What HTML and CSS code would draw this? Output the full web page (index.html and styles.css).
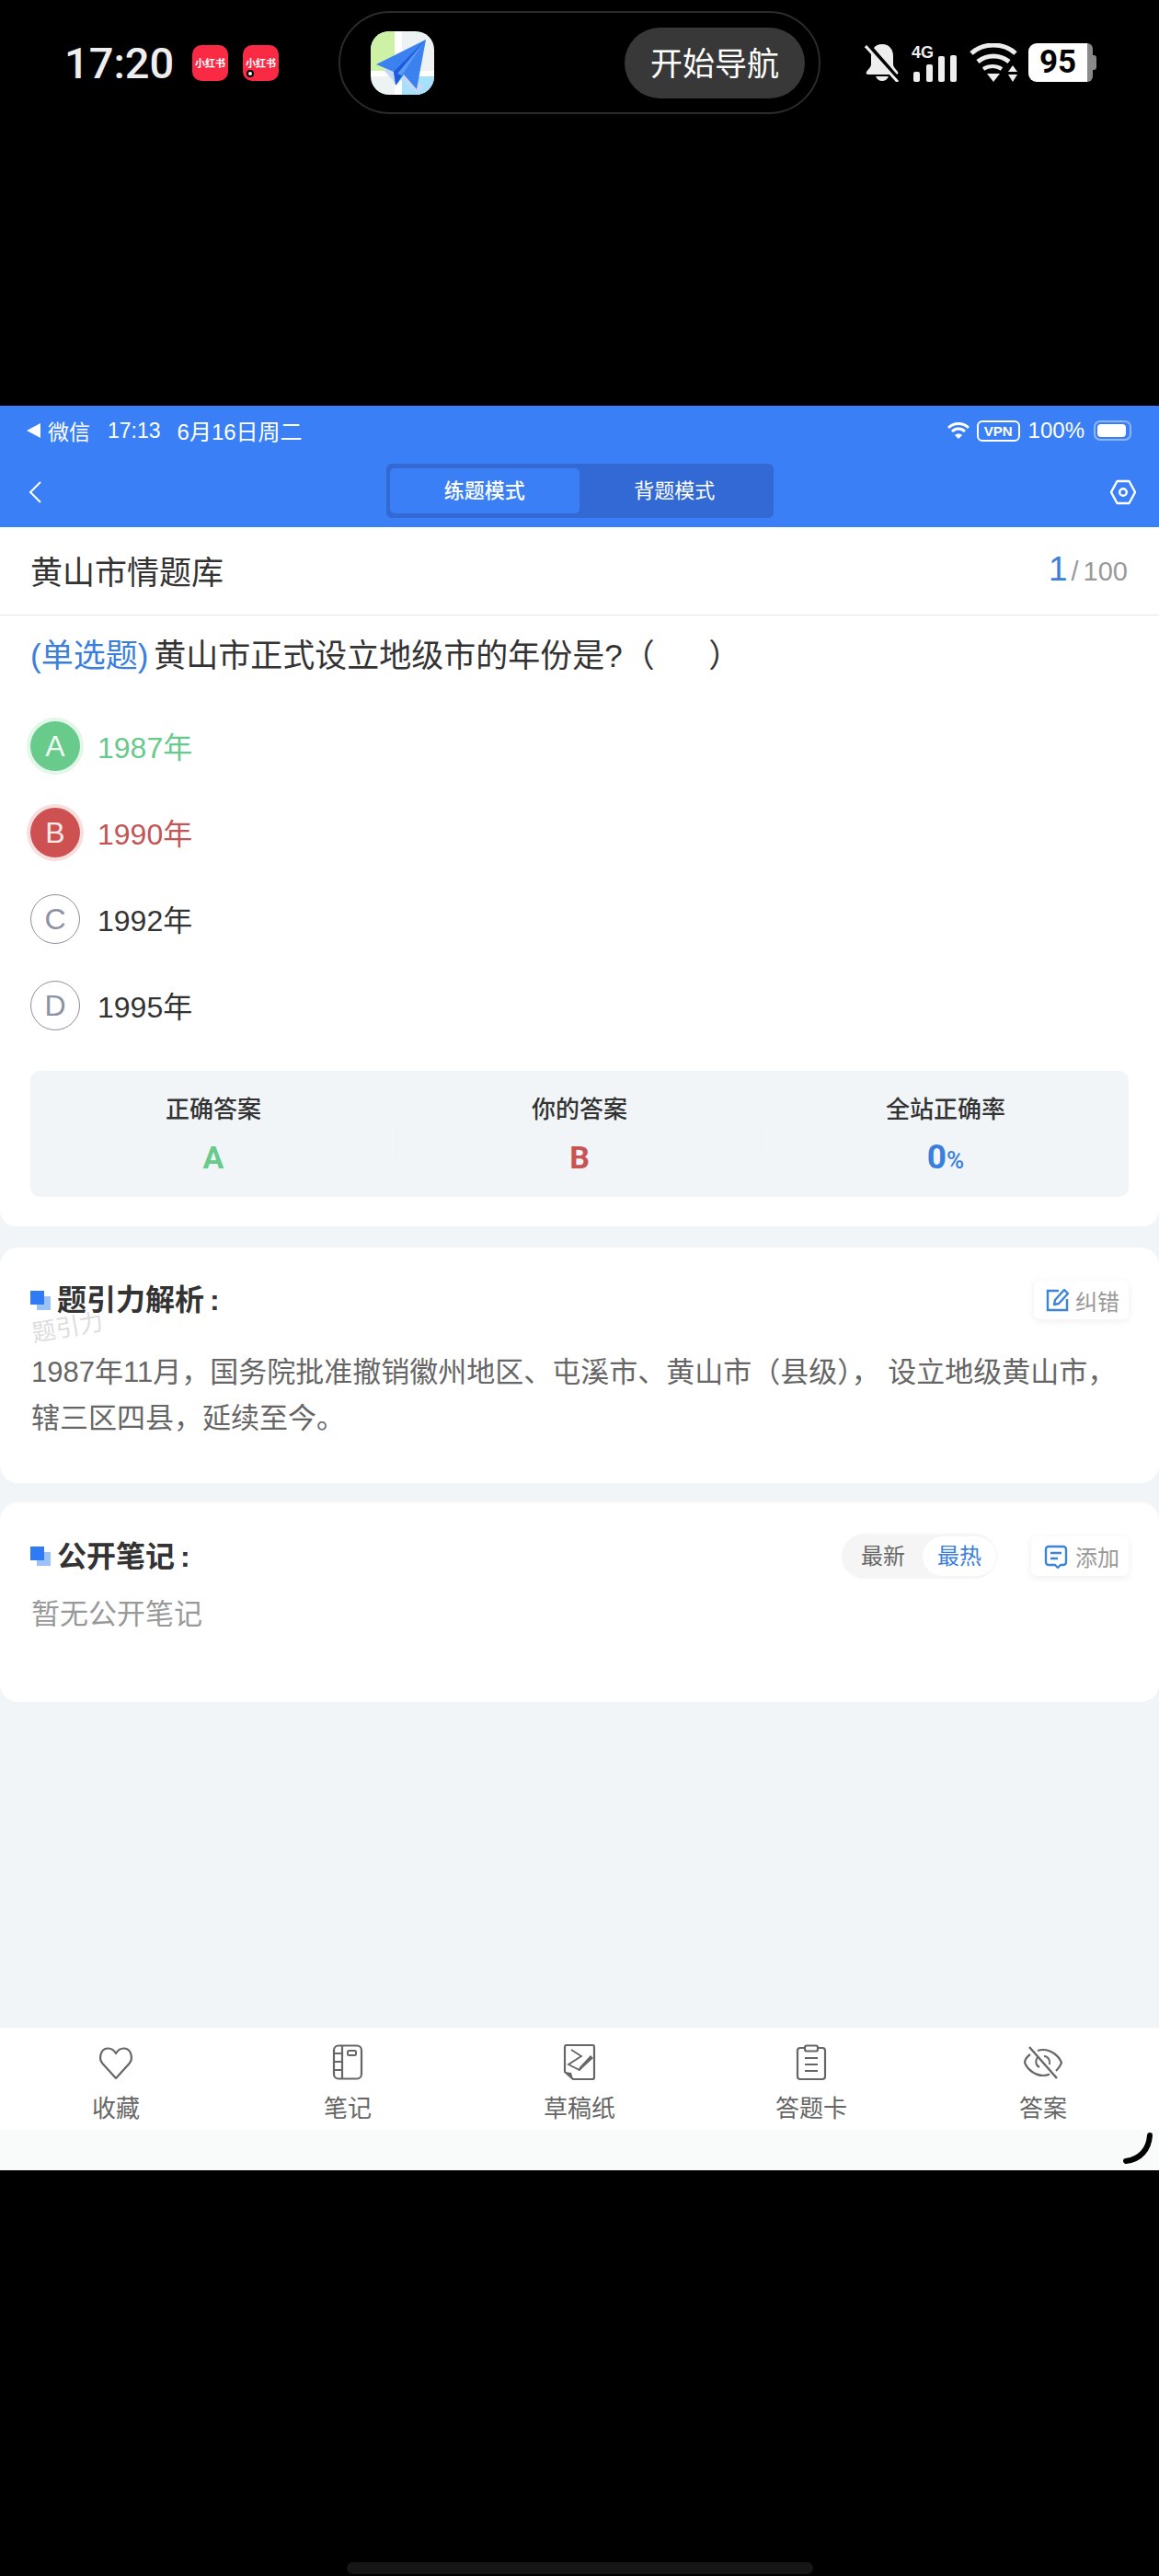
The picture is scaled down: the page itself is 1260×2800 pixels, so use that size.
FILE: index.html
```html
<!DOCTYPE html>
<html lang="zh-CN">
  <head>
    <meta charset="UTF-8" />
    <title>黄山市情题库</title>
    <link rel="stylesheet" href="styles.css">
  </head>
  <body>
    <div class="phone-top">
      <div class="phone-bar">
        <span class="phone-time">17:20</span>
        <span class="note-icon">小红书</span>
        <span class="note-icon note-icon-dot">小红书<i class="dot"></i></span>
        <div class="island">
          <svg class="nav-app" viewBox="0 0 69 69" width="69" height="69">
            <rect width="69" height="69" fill="#edf2f2"/>
            <rect width="26" height="43" fill="#cdf2a6"/>
            <rect x="34" y="48" width="35" height="21" fill="#a6e0fa"/>
            <rect x="26" width="8" height="69" fill="#fff"/>
            <rect y="43" width="69" height="6" fill="#fff"/>
            <polygon points="14,42 28,58 34,52 50,67 58,60 30,38" fill="#c4d9f7"/>
            <polygon points="60,9 6,36 25,44 28,58 36,47 50,63" fill="#3b82f0"/>
            <polygon points="60,9 25,44 27,59 34,48" fill="#1b5bdc"/>
            <polygon points="60,9 29,46 34,48" fill="#5b9af5"/>
          </svg>
          <span class="nav-btn">开始导航</span>
        </div>
        <svg class="bell" viewBox="0 0 38 42" width="38" height="42">
          <path d="M19 1c-8 0-12 6-12 13v9c0 3-3 5-5 8-1 2 0 3 2 3h30c2 0 3-1 2-3-2-3-5-5-5-8v-9C31 7 27 1 19 1z" fill="#eee"/>
          <path d="M12 36c1 3 4 5 7 5s6-2 7-5z" fill="#eee"/>
          <path d="M3 1l34 39" stroke="#000" stroke-width="5"/>
          <path d="M1 3l35 39" stroke="#eee" stroke-width="3"/>
        </svg>
        <svg class="signal" viewBox="0 0 50 42" width="50" height="42">
          <text x="0" y="16" class="signal-label">4G</text>
          <rect x="2" y="31" width="7" height="11" rx="2" fill="#eee"/>
          <rect x="16" y="23" width="7" height="19" rx="2" fill="#eee"/>
          <rect x="29" y="14" width="7" height="28" rx="2" fill="#eee"/>
          <rect x="42" y="13" width="7" height="29" rx="2" fill="#eee"/>
        </svg>
        <svg class="wifi" viewBox="0 0 52 42" width="52" height="42">
          <path d="M2 11C15-1 37-1 50 11" fill="none" stroke="#eee" stroke-width="5"/>
          <path d="M9 20c10-8 24-8 34 0" fill="none" stroke="#eee" stroke-width="5"/>
          <path d="M15 28c6-4 14-4 20 0" fill="none" stroke="#eee" stroke-width="4"/>
          <polygon points="19,33 33,33 26,42" fill="#eee"/>
          <polygon points="47,24 52,31 42,31" fill="#eee"/>
          <polygon points="42,34 52,34 47,42" fill="#eee"/>
        </svg>
        <div class="phone-batt"><span>95</span><i></i></div>
      </div>
    </div>

    <div class="app">
      <header class="app-header">
        <div class="ios-status">
          <svg viewBox="0 0 15 16" width="15" height="16"><polygon points="15,0 15,16 0,8" fill="#fff"/></svg>
          <span class="ios-app">微信</span>
          <span class="ios-time">17:13</span>
          <span class="ios-date">6月16日周二</span>
          <span class="ios-right">
            <svg viewBox="0 0 24 20" width="24" height="20">
              <path d="M1 7c6-6 16-6 22 0" fill="none" stroke="#fff" stroke-width="3"/>
              <path d="M5 11c4-4 10-4 14 0" fill="none" stroke="#fff" stroke-width="3"/>
              <path d="M12 19l-4-4c2-2 6-2 8 0z" fill="#fff"/>
            </svg>
            <span class="vpn">VPN</span>
            <span class="ios-pct">100%</span>
            <span class="ios-batt"><i></i></span>
          </span>
        </div>
        <div class="nav-row">
          <svg class="nav-back" viewBox="0 0 14 24" width="14" height="24"><path d="M13 1L2 12l11 11" fill="none" stroke="#fff" stroke-width="2"/></svg>
          <div class="mode-switch">
            <span class="mode mode-on">练题模式</span>
            <span class="mode">背题模式</span>
          </div>
          <svg class="nav-gear" viewBox="0 0 28 28" width="28" height="28">
            <polygon points="7.5,2 20.5,2 27,14 20.5,26 7.5,26 1,14" fill="none" stroke="#fff" stroke-width="2.4" stroke-linejoin="round"/>
            <circle cx="14" cy="14" r="3.8" fill="none" stroke="#fff" stroke-width="2.4"/>
          </svg>
        </div>
      </header>

      <section class="card question-card">
        <div class="bank-row">
          <span class="bank-name">黄山市情题库</span>
          <span class="bank-count"><b>1</b><i>/</i>100</span>
        </div>
        <div class="question"><span class="q-type">(单选题)</span>黄山市正式设立地级市的年份是?<span>（&nbsp;&nbsp;&nbsp;&nbsp;&nbsp;&nbsp;）</span></div>
        <div class="options">
          <div class="option right"><span class="letter">A</span><span class="opt-text">1987年</span></div>
          <div class="option wrong"><span class="letter">B</span><span class="opt-text">1990年</span></div>
          <div class="option"><span class="letter">C</span><span class="opt-text">1992年</span></div>
          <div class="option"><span class="letter">D</span><span class="opt-text">1995年</span></div>
        </div>
        <div class="stats">
          <div class="stat"><span class="stat-label">正确答案</span><span class="stat-val green">A</span></div>
          <div class="stat stat-mid"><span class="stat-label">你的答案</span><span class="stat-val red">B</span></div>
          <div class="stat"><span class="stat-label">全站正确率</span><span class="stat-val blue">0<small>%</small></span></div>
        </div>
      </section>

      <section class="card analysis-card">
        <div class="card-head">
          <h2 class="card-title"><i class="marker"></i>题引力解析<span class="colon">:</span></h2>
          <span class="mini-btn">
            <svg viewBox="0 0 26 26" width="26" height="26">
              <path d="M14 3H2v21h21V12" fill="none" stroke="#3d84d6" stroke-width="2.4"/>
              <path d="M9 18l1-5L20 2l4 4-10 11z" fill="#fff" stroke="#3d84d6" stroke-width="2.4" stroke-linejoin="round"/>
            </svg>
            纠错
          </span>
        </div>
        <p class="analysis-text">1987年11月，国务院批准撤销徽州地区、屯溪市、黄山市（县级）， 设立地级黄山市，辖三区四县，延续至今。</p>
        <span class="watermark">题引力</span>
      </section>

      <section class="card notes-card">
        <div class="card-head">
          <h2 class="card-title"><i class="marker"></i>公开笔记<span class="colon">:</span></h2>
          <div class="head-tools">
            <div class="sort-switch">
              <span class="sort">最新</span>
              <span class="sort sort-on">最热</span>
            </div>
            <span class="mini-btn add-btn">
              <svg viewBox="0 0 26 26" width="26" height="26">
                <path d="M5 2h16a3 3 0 0 1 3 3v14a3 3 0 0 1-3 3h-3l-3 3-3-3H5a3 3 0 0 1-3-3V5a3 3 0 0 1 3-3z" fill="none" stroke="#3d84d6" stroke-width="2.4" stroke-linejoin="round"/>
                <path d="M7 9h12M7 15h8" stroke="#3d84d6" stroke-width="2.4"/>
              </svg>
              添加
            </span>
          </div>
        </div>
        <p class="empty-text">暂无公开笔记</p>
      </section>

      <div class="filler"></div>

      <nav class="tabbar">
        <div class="tab">
          <svg viewBox="0 0 40 40" width="40" height="40">
            <path d="M20 37L5.500 21C1 16 3 5 11 4.500c4-.2 7 2 9 5.500 2-3.500 5-5.700 9-5.500C37 5 39 16 34.500 21z" fill="none" stroke="#666" stroke-width="2.200" stroke-linejoin="round"/>
          </svg>
          <span>收藏</span>
        </div>
        <div class="tab">
          <svg viewBox="0 0 40 40" width="40" height="40">
            <rect x="5" y="1.500" width="30" height="36" rx="5" fill="none" stroke="#666" stroke-width="2.200"/>
            <path d="M14 2v35M5 10h9M5 19h9M5 28h9" stroke="#666" stroke-width="2.200"/>
            <rect x="20" y="7" width="9" height="5" rx="1.500" fill="none" stroke="#666" stroke-width="2"/>
          </svg>
          <span>笔记</span>
        </div>
        <div class="tab">
          <svg viewBox="0 0 40 40" width="40" height="40">
            <path d="M4 3a2 2 0 0 1 2-2h28a2 2 0 0 1 2 2v33a2 2 0 0 1-2 2H13l-9-8z" fill="none" stroke="#666" stroke-width="2.200" stroke-linejoin="round"/>
            <path d="M4 30l7 1 2 7z" fill="#666"/>
            <path d="M11 6l11 7-14 9 12 6 4-5" fill="none" stroke="#666" stroke-width="1.800"/>
            <path d="M20 25l12-13 3 3-13 12-3 1z" fill="#666"/>
          </svg>
          <span>草稿纸</span>
        </div>
        <div class="tab">
          <svg viewBox="0 0 40 40" width="40" height="40">
            <path d="M12 4H8a3 3 0 0 0-3 3v28a3 3 0 0 0 3 3h24a3 3 0 0 0 3-3V7a3 3 0 0 0-3-3h-4" fill="none" stroke="#666" stroke-width="2.200"/>
            <rect x="13" y="1.500" width="14" height="6" rx="2" fill="none" stroke="#666" stroke-width="2.200"/>
            <path d="M13 15h14M13 22h14M13 29h14" stroke="#666" stroke-width="2.200"/>
          </svg>
          <span>答题卡</span>
        </div>
        <div class="tab">
          <svg viewBox="0 0 42 40" width="42" height="40">
            <path d="M7 11C3 14 1 18 1 20c3 8 12 14 20 14 3 0 5-.5 7-1.500M15 7c2-.7 4-1 6-1 8 0 17 6 20 14-1 3-3 6-6 9" fill="none" stroke="#666" stroke-width="2.200"/>
            <path d="M6 3l30 34" stroke="#666" stroke-width="2.400"/>
            <path d="M15 14c-3 4-2 9 2 11M22 13c4 0 7 4 6 9" fill="none" stroke="#666" stroke-width="2"/>
          </svg>
          <span>答案</span>
        </div>
      </nav>
      <div class="tab-foot"></div>
      <svg class="corner-arc" viewBox="0 0 34 34" width="34" height="34"><path d="M30 3C29 18 20 29 4 31" fill="none" stroke="#000" stroke-width="6" stroke-linecap="round"/></svg>
    </div>

    <div class="phone-bottom"><span class="home-bar"></span></div>
  </body>
</html>
```

FILE: styles.css
```css
html {
  background: #000000;
}

body {
  margin: 0;
  width: 1260px;
  height: 2800px;
  overflow: hidden;
  background: #000000;
  font-family: "Liberation Sans", "Noto Sans CJK SC", sans-serif;
  color: #333333;
}

/* phone status bar */
.phone-top {
  height: 441px;
}
.phone-bar {
  display: flex;
  align-items: center;
  height: 136px;
  padding-left: 70px;
}
.phone-time {
  width: 117px;
  margin-right: 22px;
  font-family: Roboto, sans-serif;
  font-size: 47px;
  font-weight: 500;
  color: #eeeeee;
}
.note-icon {
  position: relative;
  display: flex;
  align-items: center;
  justify-content: center;
  width: 39px;
  height: 39px;
  margin-right: 16px;
  border-radius: 10px;
  background: #fa2a45;
  color: #ffffff;
  font-size: 11px;
  font-weight: 700;
  white-space: nowrap;
}
.dot {
  position: absolute;
  left: 4px;
  bottom: 4px;
  width: 4px;
  height: 4px;
  border: 2px solid #000000;
  border-radius: 50%;
  background: #ffffff;
}
.island {
  display: flex;
  align-items: center;
  justify-content: space-between;
  box-sizing: border-box;
  width: 524px;
  height: 112px;
  margin-left: 49px;
  margin-right: 48px;
  padding: 0 15px 0 33px;
  border: 2px solid #2b2b2b;
  border-radius: 56px;
}
.nav-app {
  border-radius: 20px;
}
.nav-btn {
  display: flex;
  align-items: center;
  justify-content: center;
  box-sizing: border-box;
  width: 196px;
  height: 77px;
  padding-bottom: 3px;
  border-radius: 39px;
  background: #383838;
  color: #ffffff;
  font-size: 35px;
}
.signal {
  margin-left: 13px;
}
.signal-label {
  font-family: "Liberation Sans", sans-serif;
  font-size: 18px;
  font-weight: 700;
  fill: #eeeeee;
}
.wifi {
  margin-left: 13px;
}
.phone-batt {
  display: flex;
  align-items: center;
  width: 74px;
  height: 42px;
  margin-left: 12px;
}
.phone-batt span {
  width: 64px;
  height: 42px;
  border-radius: 9px 0 0 9px;
  background: #ffffff;
  color: #000000;
  font-family: Roboto, sans-serif;
  font-size: 35px;
  font-weight: 700;
  line-height: 42px;
  text-align: center;
}
.phone-batt i {
  position: relative;
  width: 6px;
  height: 42px;
  border-radius: 0 7px 7px 0;
  background: #8a8a8a;
}
.phone-batt i::after {
  content: "";
  position: absolute;
  left: 6px;
  top: 13px;
  width: 4px;
  height: 16px;
  border-radius: 0 3px 3px 0;
  background: #8a8a8a;
}

/* app screen */
.app {
  position: relative;
  display: flex;
  flex-direction: column;
  height: 1918px;
  background: #f1f5f8;
  overflow: hidden;
}
.app-header {
  background: #3a7ff6;
  color: #ffffff;
}
.ios-status {
  display: flex;
  align-items: center;
  height: 54px;
  padding: 0 30px 2px 29px;
  font-size: 23px;
}
.ios-app {
  margin-left: 8px;
}
.ios-time {
  margin-left: 19px;
}
.ios-date {
  margin-left: 18px;
  margin-bottom: 2px;
  font-size: 24px;
}
.ios-right {
  display: flex;
  align-items: center;
  margin-left: auto;
}
.vpn {
  box-sizing: border-box;
  width: 47px;
  height: 23px;
  margin-left: 8px;
  border: 2px solid #ffffff;
  border-radius: 6px;
  font-size: 15px;
  font-weight: 700;
  line-height: 19px;
  text-align: center;
}
.ios-pct {
  margin-left: 9px;
  font-size: 24px;
}
.ios-batt {
  box-sizing: border-box;
  display: flex;
  width: 41px;
  height: 22px;
  margin-left: 10px;
  padding: 2px 4px 2px 2px;
  border: 2px solid #8fb6fa;
  border-radius: 7px;
}
.ios-batt i {
  flex: 1;
  border-radius: 4px;
  background: #ffffff;
}
.nav-row {
  display: grid;
  grid-template-columns: 1fr auto 1fr;
  align-items: center;
  height: 76px;
  padding: 0 25px;
}
.nav-back {
  margin-left: 6px;
}
.nav-gear {
  justify-self: end;
}
.mode-switch {
  display: flex;
  box-sizing: border-box;
  width: 421px;
  height: 59px;
  margin-top: -3px;
  padding: 5px 4px;
  border-radius: 6px;
  background: #3269d4;
}
.mode {
  flex: 1;
  border-radius: 5px;
  font-size: 22px;
  line-height: 49px;
  text-align: center;
}
.mode-on {
  background: #3a7ff6;
  font-weight: 500;
}

.card {
  position: relative;
  background: #ffffff;
  border-radius: 20px;
}
.question-card {
  padding-bottom: 32px;
  border-radius: 0 0 18px 18px;
}
.bank-row {
  display: flex;
  align-items: center;
  justify-content: space-between;
  box-sizing: border-box;
  height: 96px;
  padding: 0 34px 3px 33px;
  border-bottom: 1px solid #e8e8e8;
}
.bank-name {
  font-size: 35px;
}
.bank-count {
  color: #999999;
  font-size: 29px;
}
.bank-count b {
  color: #3b7fdc;
  font-size: 37px;
  font-weight: 400;
}
.bank-count i {
  margin: 0 5px 0 4px;
  font-style: normal;
}
.question {
  display: flex;
  align-items: center;
  height: 80px;
  padding-left: 33px;
  font-size: 35px;
  white-space: pre;
}
.q-type {
  margin-right: 6px;
  color: #3b7fdc;
}
.options {
  margin-top: 15px;
}
.option {
  display: flex;
  align-items: center;
  height: 94px;
  padding-left: 33px;
  font-size: 32px;
}
.opt-text {
  margin-bottom: 3px;
}
.letter {
  display: flex;
  align-items: center;
  justify-content: center;
  box-sizing: border-box;
  width: 54px;
  height: 54px;
  margin-right: 19px;
  border: 1.5px solid #8d8f9c;
  border-radius: 50%;
  color: #8d92a3;
  font-size: 32px;
}
.right {
  color: #68c98c;
}
.right .letter {
  border: 0;
  background: #68cb8b;
  box-shadow: 0 0 0 4px #e2f6ea;
  color: #eefaf2;
}
.wrong {
  color: #c25656;
}
.wrong .letter {
  border: 0;
  background: #cd5150;
  box-shadow: 0 0 0 4px #f8dfdf;
  color: #fbeaea;
}
.stats {
  display: flex;
  height: 137px;
  margin: 24px 33px 0;
  border-radius: 10px;
  background: #f1f5f8;
}
.stat {
  display: flex;
  flex: 1;
  flex-direction: column;
  align-items: center;
  padding-top: 24px;
}
.stat-mid {
  background: linear-gradient(#edf1f4, #edf1f4) left 60px / 1px 32px no-repeat,
    linear-gradient(#edf1f4, #edf1f4) right 60px / 1px 32px no-repeat;
}
.stat-label {
  font-size: 26px;
  font-weight: 500;
  line-height: 36px;
}
.stat-val {
  margin-top: 14px;
  font-family: Roboto, sans-serif;
  font-size: 34px;
  font-weight: 700;
  line-height: 40px;
}
.stat-val.blue {
  font-size: 37px;
}
.stat-val small {
  font-size: 26px;
  font-weight: 500;
}
.green {
  color: #68cb8b;
}
.red {
  color: #c75353;
}
.blue {
  color: #3b7fdc;
}

.analysis-card {
  margin-top: 23px;
  padding: 36px 33px 45px 34px;
}
.notes-card {
  margin-top: 21px;
  padding: 34px 33px 70px 34px;
}
.card-head {
  display: flex;
  align-items: center;
  justify-content: space-between;
}
.card-title {
  display: flex;
  align-items: center;
  margin: 0;
  font-size: 32px;
  font-weight: 700;
  line-height: 42px;
}
.colon {
  margin-left: 6px;
}
.marker {
  position: relative;
  width: 22px;
  height: 21px;
  margin-left: -1px;
  margin-right: 7px;
}
.marker::before,
.marker::after {
  content: "";
  position: absolute;
  width: 15px;
  height: 15px;
}
.marker::before {
  right: 0;
  bottom: 0;
  background: #9cc3f8;
}
.marker::after {
  left: 0;
  top: 0;
  background: #2f7bf6;
}
.mini-btn {
  display: flex;
  align-items: center;
  gap: 6px;
  box-sizing: border-box;
  height: 42px;
  padding: 0 10px 0 13px;
  border-radius: 6px;
  background: #ffffff;
  box-shadow: 0 2px 8px rgba(0, 0, 0, 0.07);
  color: #999999;
  font-size: 24px;
}
.add-btn {
  gap: 8px;
  height: 43px;
  padding-left: 14px;
}
.head-tools {
  display: flex;
  align-items: center;
  gap: 37px;
}
.sort-switch {
  display: flex;
  align-items: center;
  box-sizing: border-box;
  width: 169px;
  height: 49px;
  padding: 3px 1px 3px 2px;
  border-radius: 25px;
  background: #f5f5f5;
}
.sort {
  flex: 1;
  color: #666666;
  font-size: 24px;
  line-height: 43px;
  text-align: center;
}
.sort-on {
  flex: none;
  width: 80px;
  border-radius: 22px;
  background: #ffffff;
  color: #3b7fdc;
}
.analysis-text {
  margin: 33px 0 0;
  color: #666666;
  font-size: 31px;
  line-height: 50px;
}
.watermark {
  position: absolute;
  left: 34px;
  top: 66px;
  color: #dddddd;
  font-size: 26px;
  transform: rotate(-10deg);
}
.empty-text {
  margin: 14px 0 0;
  color: #999999;
  font-size: 31px;
  line-height: 50px;
}

.filler {
  flex: 1;
}
.tabbar {
  display: grid;
  grid-template-columns: repeat(5, 1fr);
  height: 111px;
  background: #ffffff;
}
.tab {
  display: flex;
  flex-direction: column;
  align-items: center;
  padding-top: 18px;
  color: #666666;
  font-size: 26px;
  line-height: 36px;
}
.tab span {
  margin-top: 12px;
}
.tab-foot {
  height: 44px;
  background: #f9fafa;
}
.corner-arc {
  position: absolute;
  right: 6px;
  bottom: 7px;
}

.phone-bottom {
  display: flex;
  align-items: flex-end;
  justify-content: center;
  height: 441px;
}
.home-bar {
  width: 507px;
  height: 13px;
  margin-bottom: 2px;
  border-radius: 7px;
  background: #161616;
}
```
